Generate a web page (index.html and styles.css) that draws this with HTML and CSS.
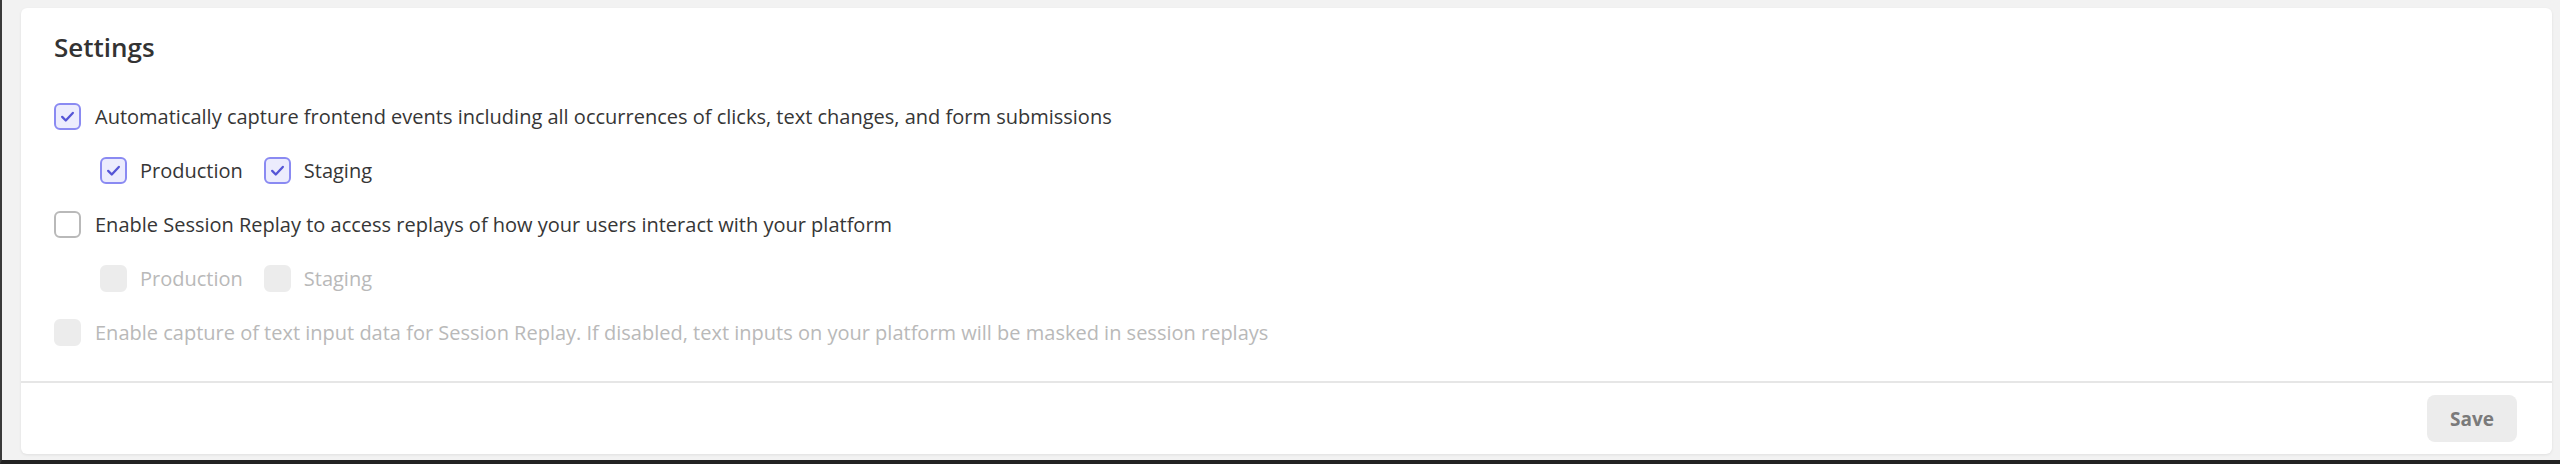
FILE: index.html
```html
<!DOCTYPE html>
<html lang="en">
<head>
<meta charset="utf-8">
<title>Settings</title>
<link rel="stylesheet" href="styles.css">
</head>
<body>
<div class="page">
  <section class="card">
    <div class="card-body">
      <h2 class="title">Settings</h2>
      <div class="options">
        <label class="row">
          <span class="cb checked"><svg viewBox="0 0 16 16"><path d="M4.3 8.3l2.5 2.5 4.9-5.3"/></svg></span>
          <span class="label">Automatically capture frontend events including all occurrences of clicks, text changes, and form submissions</span>
        </label>
        <div class="row sub">
          <label class="item">
            <span class="cb checked"><svg viewBox="0 0 16 16"><path d="M4.3 8.3l2.5 2.5 4.9-5.3"/></svg></span>
            <span class="label">Production</span>
          </label>
          <label class="item">
            <span class="cb checked"><svg viewBox="0 0 16 16"><path d="M4.3 8.3l2.5 2.5 4.9-5.3"/></svg></span>
            <span class="label">Staging</span>
          </label>
        </div>
        <label class="row">
          <span class="cb"></span>
          <span class="label">Enable Session Replay to access replays of how your users interact with your platform</span>
        </label>
        <div class="row sub disabled">
          <label class="item">
            <span class="cb"></span>
            <span class="label">Production</span>
          </label>
          <label class="item">
            <span class="cb"></span>
            <span class="label">Staging</span>
          </label>
        </div>
        <label class="row disabled">
          <span class="cb"></span>
          <span class="label">Enable capture of text input data for Session Replay. If disabled, text inputs on your platform will be masked in session replays</span>
        </label>
      </div>
    </div>
    <div class="card-footer">
      <button class="btn-save" type="button">Save</button>
    </div>
  </section>
</div>
</body>
</html>
```

FILE: styles.css
```css
* { box-sizing: border-box; }

html, body {
  margin: 0;
  padding: 0;
}

body {
  width: 2560px;
  height: 464px;
  background: #f2f2f2;
  border-left: 2px solid #3a3a3a;
  border-bottom: 4px solid #222;
  font-family: "Open Sans", "Noto Sans", sans-serif;
  color: #363636;
  overflow: hidden;
}

.page {
  padding: 8px 8px 6px 19px;
  height: 100%;
}

.card {
  background: #fff;
  border-radius: 6px;
  box-shadow: 0 1px 3px rgba(0, 0, 0, 0.08);
  height: 446px;
  display: flex;
  flex-direction: column;
}

.card-body {
  flex: 1;
  padding: 22px 33px 0 33px;
}

.title {
  margin: 0;
  font-size: 26px;
  font-weight: 600;
  color: #333;
  line-height: 35px;
}

.options {
  margin-top: 38px;
  display: flex;
  flex-direction: column;
  gap: 27px;
}

.row {
  display: flex;
  align-items: center;
  height: 27px;
  gap: 14px;
  font-size: 20px;
}

.row.sub {
  padding-left: 46px;
  gap: 21px;
}

.item {
  display: flex;
  align-items: center;
  gap: 13px;
}

.label {
  white-space: nowrap;
  line-height: 27px;
}

.cb {
  width: 27px;
  height: 27px;
  flex: none;
  border-radius: 6px;
  border: 2px solid #b9b9b9;
  background: #fff;
  display: flex;
  align-items: center;
  justify-content: center;
}

.cb.checked {
  border-color: #8a8af2;
  background: #ececfd;
}

.cb svg {
  width: 25px;
  height: 25px;
  fill: none;
  stroke: #5555d6;
  stroke-width: 1.6;
  stroke-linecap: round;
  stroke-linejoin: round;
}

.disabled .cb {
  border-color: #ececec;
  background: #ececec;
}

.disabled .label {
  color: #b9b9b9;
}

.card-footer {
  border-top: 2px solid #e6e6e6;
  padding: 12px 35px 12px 0;
  display: flex;
  justify-content: flex-end;
}

.btn-save {
  width: 90px;
  height: 47px;
  border: none;
  border-radius: 8px;
  background: #ececec;
  color: #7a7a7a;
  font-family: "Open Sans", "Noto Sans", sans-serif;
  font-size: 19px;
  font-weight: 700;
  cursor: pointer;
}
```
